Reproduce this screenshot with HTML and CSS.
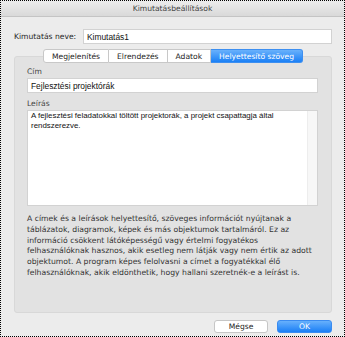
FILE: index.html
```html
<!DOCTYPE html>
<html lang="hu">
<head>
<meta charset="UTF-8" />
<meta name="viewport" content="width=device-width, initial-scale=1" />
<title>Kimutatásbeállítások</title>
<link rel="stylesheet" href="styles.css">
</head>
<body>

<div class="window">
  <div class="titlebar">Kimutatásbeállítások</div>

  <div class="content">
    <div class="nameRow">
      <label class="nameLabel">Kimutatás neve:</label>
      <div class="field nameField">Kimutatás1</div>
    </div>

    <div class="tabs">
      <div class="tab">Megjelenítés</div>
      <div class="tab">Elrendezés</div>
      <div class="tab">Adatok</div>
      <div class="tab selected">Helyettesítő szöveg</div>
    </div>

    <div class="panel">
      <div class="fieldLabel">Cím</div>
      <div class="field titleField">Fejlesztési projektórák</div>

      <div class="fieldLabel descLabel">Leírás</div>
      <div class="textarea">
        <div class="textareaText">A fejlesztési feladatokkal töltött projektorák, a projekt csapattagja által rendszerezve.</div>
        <div class="scrollTrack"></div>
      </div>

      <p class="help">A címek és a leírások helyettesítő, szöveges információt nyújtanak a táblázatok, diagramok, képek és más objektumok tartalmáról. Ez az információ csökkent látóképességű vagy értelmi fogyatékos felhasználóknak hasznos, akik esetleg nem látják vagy nem értik az adott objektumot. A program képes felolvasni a címet a fogyatékkal élő felhasználóknak, akik eldönthetik, hogy hallani szeretnék-e a leírást is.</p>
    </div>

    <div class="buttons">
      <button class="btn">Mégse</button>
      <button class="btn primary">OK</button>
    </div>
  </div>
</div>

</body>
</html>
```

FILE: styles.css
```css
body {
  margin: 0;
  font-family: "DejaVu Sans", "Liberation Sans", sans-serif;
  color: #262626;
}
.window {
  width: 345px;
  height: 337px;
  box-sizing: border-box;
  border: 1px dotted #000;
  background: #ececec;
}
.titlebar {
  height: 15px;
  line-height: 15px;
  text-align: center;
  font-size: 7.6px;
  color: #444;
  background: linear-gradient(#ececec, #d9d9d9);
  border-bottom: 1px solid #c4c4c4;
}
.content {
  padding: 12px 12px 0 13px;
}
.nameRow {
  display: flex;
  align-items: center;
  height: 15px;
}
.nameLabel {
  font-size: 7.6px;
  width: 69px;
}
.field {
  background: #fff;
  border: 1px solid #d2d2d2;
  box-sizing: border-box;
  font-family: "Liberation Sans", sans-serif;
  font-size: 8.4px;
  color: #111;
  padding-left: 3px;
  display: flex;
  align-items: center;
}
.nameField {
  flex: 1;
  height: 15px;
}
.tabs {
  display: flex;
  justify-content: center;
  margin: 5px 0 -7px 0;
  position: relative;
  z-index: 1;
}
.tab {
  height: 14px;
  line-height: 13px;
  box-sizing: border-box;
  font-size: 7.6px;
  color: #222;
  background: #fff;
  border: 1px solid #c8c8c8;
  border-left: none;
  padding: 0 8px;
}
.tab:first-child {
  border-left: 1px solid #c8c8c8;
  border-radius: 3px 0 0 3px;
}
.tab.selected {
  background: linear-gradient(#69b1fc, #1b80f6);
  border-color: #3d8ff0;
  color: #fff;
  border-radius: 0 3px 3px 0;
}
.panel {
  height: 257px;
  box-sizing: border-box;
  background: #e2e2e2;
  border: 1px solid #d8d8d8;
  border-radius: 3px;
  padding: 10px 13px 0 12px;
}
.fieldLabel {
  font-size: 7.6px;
  color: #444;
  height: 10px;
  line-height: 10px;
  margin-bottom: 1px;
}
.titleField {
  height: 15px;
}
.descLabel {
  margin-top: 6px;
}
.textarea {
  height: 96px;
  display: flex;
  background: #fff;
  border: 1px solid #d2d2d2;
  box-sizing: border-box;
}
.textareaText {
  flex: 1;
  font-family: "Liberation Sans", sans-serif;
  font-size: 7.9px;
  line-height: 10px;
  color: #111;
  padding: 0 3px;
}
.scrollTrack {
  width: 9px;
  background: #f7f7f7;
  border-left: 1px solid #ededed;
}
.help {
  margin: 8px 0 0 0;
  font-size: 7.7px;
  line-height: 10.8px;
  color: #333;
}
.buttons {
  display: flex;
  justify-content: flex-end;
  gap: 9px;
  margin-top: 7px;
}
.btn {
  height: 13px;
  width: 54px;
  padding: 0;
  font-family: "DejaVu Sans", sans-serif;
  font-size: 7.6px;
  color: #222;
  background: #fff;
  border: 1px solid #c6c6c6;
  border-radius: 3px;
}
.btn.primary {
  width: 55px;
  color: #fff;
  background: linear-gradient(#67b0fc, #1a7ff6);
  border-color: #3a8bf0;
}
```
